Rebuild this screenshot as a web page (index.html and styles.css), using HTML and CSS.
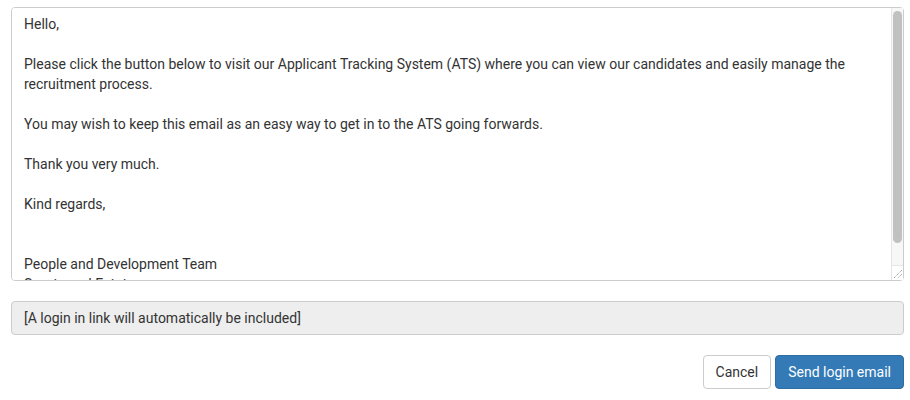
FILE: index.html
```html
<!DOCTYPE html>
<html lang="en">
<head>
    <meta charset="UTF-8">
    <title>Send login email</title>
    <link rel="stylesheet" href="styles.css">
</head>
<body>
    <div class="panel">
        <div class="editor">
            <textarea class="message" name="message">Hello,

Please click the button below to visit our Applicant Tracking System (ATS) where you can view our candidates and easily manage the recruitment process.

You may wish to keep this email as an easy way to get in to the ATS going forwards.

Thank you very much.

Kind regards,


People and Development Team
Sports and Estates</textarea>
            <div class="scrollbar"><div class="thumb"></div></div>
            <div class="corner">
                <svg width="12" height="15" viewBox="0 0 12 15">
                    <path d="M11 5 L3 13 M11 9 L7 13" stroke="#8a8a8a" stroke-width="1" stroke-dasharray="1 1" fill="none"/>
                </svg>
            </div>
        </div>
        <div class="note">[A login in link will automatically be included]</div>
        <div class="actions">
            <button type="button" class="btn btn-default">Cancel</button>
            <button type="button" class="btn btn-primary">Send login email</button>
        </div>
    </div>
</body>
</html>
```

FILE: styles.css
```css
body{
    margin: 0;
    font-family: Roboto, "Liberation Sans", sans-serif;
    font-size: 14px;
    line-height: 20px;
    color: #333;
    background: #fff;
}
.panel{
    display: flex;
    flex-direction: column;
    padding: 7px 6px 0 11px;
}
.editor{
    position: relative;
}
.message{
    display: block;
    box-sizing: border-box;
    width: 100%;
    height: 274px;
    margin: 0;
    padding: 6px 12px;
    font: inherit;
    color: #333;
    border: 1px solid #ccc;
    border-radius: 4px;
    resize: none;
    overflow-y: scroll;
    outline: none;
}
.message::-webkit-scrollbar{
    display: none;
}
/* fake scrollbar, the headless browser hides the real one */
.scrollbar{
    position: absolute;
    top: 1px;
    right: 1px;
    bottom: 16px;
    width: 11px;
    background: #f7f7f7;
    border-left: 1px solid #e6e6e6;
}
.thumb{
    margin: 3px 1px 0 1px;
    height: 232px;
    background: #c1c1c1;
    border-radius: 5px;
}
.corner{
    position: absolute;
    right: 1px;
    bottom: 1px;
    width: 12px;
    height: 15px;
    background: #fff;
    border-left: 1px solid #e6e6e6;
    border-top: 1px solid #e6e6e6;
    box-sizing: border-box;
}
.corner svg{
    display: block;
    position: absolute;
    right: 0;
    bottom: 0;
}
.note{
    margin-top: 20px;
    padding: 6px 12px;
    background: #eee;
    border: 1px solid #ccc;
    border-radius: 4px;
}
.actions{
    display: flex;
    justify-content: flex-end;
    gap: 4px;
    margin-top: 20px;
}
.btn{
    height: 34px;
    padding: 6px 12px;
    font: inherit;
    border: 1px solid transparent;
    border-radius: 4px;
    cursor: pointer;
}
.btn-default{
    color: #333;
    background: #fff;
    border-color: #ccc;
}
.btn-primary{
    color: #fff;
    background: #337ab7;
    border-color: #2e6da4;
}
```
